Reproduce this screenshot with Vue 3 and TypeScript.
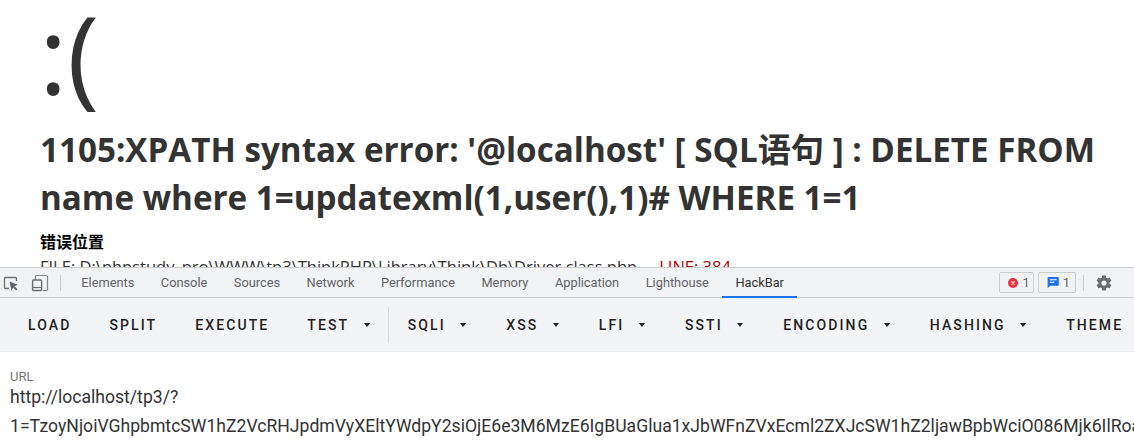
<script setup lang="ts">
const tabs = ['Elements', 'Console', 'Sources', 'Network', 'Performance', 'Memory', 'Application', 'Lighthouse', 'HackBar']
const leftButtons = [
  { label: 'LOAD', menu: false },
  { label: 'SPLIT', menu: false },
  { label: 'EXECUTE', menu: false },
  { label: 'TEST', menu: true },
]
const rightButtons = [
  { label: 'SQLI', menu: true },
  { label: 'XSS', menu: true },
  { label: 'LFI', menu: true },
  { label: 'SSTI', menu: true },
  { label: 'ENCODING', menu: true },
  { label: 'HASHING', menu: true },
  { label: 'THEME', menu: false },
]
</script>

<template>
  <div class="root">
    <main class="page">
      <div class="face">:(</div>
      <h1 class="title">1105:XPATH syntax error: '@localhost' [ SQL语句 ] : DELETE FROM name where 1=updatexml(1,user(),1)# WHERE 1=1</h1>
      <h2 class="loc">错误位置</h2>
      <p class="file">FILE: D:\phpstudy_pro\WWW\tp3\ThinkPHP\Library\Think\Db\Driver.class.php<span class="sep"></span><span class="line">LINE: 384</span></p>
    </main>
    <section class="devtools">
      <header class="tabbar">
        <svg class="ico" width="20" height="20" viewBox="0 0 20 20">
          <path d="M8 15.500H4.500a1 1 0 0 1-1-1V5.500a1 1 0 0 1 1-1h10a1 1 0 0 1 1 1V8" fill="none" stroke="#6e6e6e" stroke-width="1.300"/>
          <path d="M8.500 8.500l8.300 3.200-3.400 1.500 3 3-1.300 1.300-3-3-1.500 3.400z" fill="#5f6368"/>
        </svg>
        <svg class="ico ico2" width="20" height="20" viewBox="0 0 20 20">
          <path d="M5.500 7V3.500a1 1 0 0 1 1-1h10a1 1 0 0 1 1 1v13a1 1 0 0 1-1 1h-4" fill="none" stroke="#80868b" stroke-width="1.200"/>
          <rect x="2.600" y="7" width="9" height="10.500" rx="1" fill="none" stroke="#6e6e6e" stroke-width="1.400"/>
          <path d="M3 14.500h8" stroke="#6e6e6e" stroke-width="1.200"/>
        </svg>
        <span class="vdiv first"></span>
        <nav class="tabs">
          <span v-for="t in tabs" :key="t" class="tab" :class="{ active: t === 'HackBar' }">{{ t }}</span>
        </nav>
        <div class="status">
          <span class="pill pill-err">
            <svg width="10" height="10" viewBox="0 0 12 12"><circle cx="6" cy="6" r="6" fill="#e8303f"/><path d="M4.200 4.200l3.600 3.600M7.800 4.200l-3.600 3.600" stroke="#fff" stroke-width="1.400"/></svg>
            1
          </span>
          <span class="pill pill-msg">
            <svg width="12" height="13" viewBox="0 0 13 14"><path d="M1.500 1h10.500a.8.8 0 0 1 .8.800v8a.8.800 0 0 1-.8.800H3.500L.7 13.200V1.800a.8.8 0 0 1 .8-.8z" fill="#1a73e8"/><path d="M3 4h7.500M3 6.800h5" stroke="#fff" stroke-width="1.100"/></svg>
            1
          </span>
          <span class="vdiv"></span>
          <svg class="gear" width="18" height="18" viewBox="0 0 24 24"><path fill="#6a6d70" d="M19.430 12.980c.04-.32.070-.64.070-.98s-.03-.66-.07-.98l2.110-1.650c.19-.15.240-.42.120-.64l-2-3.460c-.12-.22-.39-.3-.61-.22l-2.490 1c-.52-.4-1.080-.73-1.690-.98l-.38-2.650A.49.490 0 0 0 14 2h-4c-.25 0-.46.180-.49.420l-.38 2.650c-.61.250-1.170.590-1.690.98l-2.490-1c-.23-.09-.49 0-.61.220l-2 3.460c-.13.220-.07.490.12.640l2.110 1.650c-.04.320-.07.650-.07.980s.03.660.07.980l-2.110 1.650c-.19.150-.24.420-.12.640l2 3.460c.12.220.39.300.61.220l2.490-1c.52.400 1.080.730 1.690.980l.38 2.650c.03.240.24.420.49.420h4c.25 0 .46-.18.490-.42l.38-2.650c.61-.25 1.170-.59 1.690-.98l2.490 1c.23.090.49 0 .61-.22l2-3.460c.12-.22.070-.49-.12-.64l-2.110-1.650zM12 15.500c-1.930 0-3.500-1.570-3.500-3.500s1.570-3.500 3.500-3.500 3.500 1.570 3.500 3.500-1.570 3.500-3.500 3.500z"/></svg>
        </div>
      </header>
      <div class="toolbar">
        <button v-for="b in leftButtons" :key="b.label" class="btn" :class="{ menu: b.menu }">{{ b.label }}<i v-if="b.menu" class="caret"></i></button>
        <span class="tdiv"></span>
        <button v-for="b in rightButtons" :key="b.label" class="btn" :class="{ menu: b.menu }">{{ b.label }}<i v-if="b.menu" class="caret"></i></button>
      </div>
      <div class="form">
        <label class="label">URL</label>
        <div class="value">http://localhost/tp3/?<br>1=TzoyNjoiVGhpbmtcSW1hZ2VcRHJpdmVyXEltYWdpY2siOjE6e3M6MzE6IgBUaGlua1xJbWFnZVxEcml2ZXJcSW1hZ2ljawBpbWciO086Mjk6IlRoaW5rXFNlc3Npb24</div>
      </div>
    </section>
  </div>
</template>

<style>
html, body { margin: 0; background: #fff; }
</style>

<style scoped>
.root {
  width: 1134px;
  height: 445px;
  display: flex;
  flex-direction: column;
  overflow: hidden;
  background: #fff;
}
.page {
  height: 267px;
  flex: none;
  overflow: hidden;
  padding: 0 30px 0 40px;
  box-sizing: border-box;
  color: #333;
  font-family: "Open Sans", "Noto Sans CJK SC", sans-serif;
}
.face {
  font-size: 108px;
  line-height: 100px;
  height: 100px;
  padding-top: 4px;
  margin-bottom: 22px;
  margin-left: -1px;
  font-weight: 400;
}
.title {
  margin: 0;
  font-size: 33.200px;
  line-height: 48px;
  font-weight: 700;
}
.loc {
  margin: 7px 0 0;
  font-size: 16px;
  line-height: 24px;
  font-weight: 700;
  color: #000;
  font-family: "Noto Sans CJK SC", sans-serif;
}
.file {
  margin: 3px 0 0;
  font-size: 16.500px;
  line-height: 22px;
  white-space: nowrap;
  font-family: "Open Sans", sans-serif;
}
.sep { display: inline-block; width: 22px; }
.line { color: #a00; }
.devtools {
  flex: 1;
  display: flex;
  flex-direction: column;
  min-height: 0;
  border-top: 1px solid #cbcdd1;
}
.tabbar {
  height: 29px;
  flex: none;
  display: flex;
  align-items: center;
  background: #f1f3f4;
  border-bottom: 1px solid #cbcdd1;
  font-family: Roboto, sans-serif;
  font-size: 12.800px;
  color: #5f6368;
}
.ico { margin-left: 1px; flex: none; }
.ico2 { margin-left: 9px; }
.vdiv { width: 1px; height: 16px; background: #ccc; flex: none; }
.first { margin-left: 10px; }
.tabs { display: flex; height: 100%; margin-left: 7px; }
.tab {
  display: flex;
  align-items: center;
  padding: 0 13.250px;
  height: 100%;
  box-sizing: border-box;
}
.tab.active {
  color: #333;
  border-bottom: 2px solid #1a73e8;
  margin-bottom: -1px;
  height: calc(100% + 1px);
  padding-top: 1px;
}
.status {
  margin-left: auto;
  display: flex;
  align-items: center;
  gap: 4px;
  padding-right: 21px;
}
.pill {
  display: flex;
  align-items: center;
  height: 21px;
  border: 1px solid #cbcdd1;
  border-radius: 2px;
  box-sizing: border-box;
}
.pill-err { gap: 5px; padding: 0 3px 0 8px; }
.pill-msg { gap: 4px; padding: 0 5px 0 8px; }
.status .vdiv { margin: 0 7px 0 3px; }
.toolbar {
  height: 53px;
  flex: none;
  display: flex;
  align-items: center;
  background: #f3f4f6;
  padding-left: 9px;
  box-sizing: border-box;
  white-space: nowrap;
  overflow: hidden;
}
.btn {
  all: unset;
  flex: none;
  display: flex;
  align-items: center;
  padding: 0 19px;
  height: 36px;
  font-family: Roboto, sans-serif;
  font-size: 14px;
  font-weight: 500;
  letter-spacing: 2.100px;
  color: #1f1f1f;
}
.caret {
  display: block;
  margin-left: 14.500px;
  margin-right: 2px;
  width: 0;
  height: 0;
  border-left: 3.500px solid transparent;
  border-right: 3.500px solid transparent;
  border-top: 4px solid #222;
}
.tdiv { width: 1px; height: 36px; background: #d8d9db; flex: none; margin: 0 0 0 -3px; }
.form {
  flex: 1;
  padding: 18px 10px 0;
  font-family: Roboto, sans-serif;
  overflow: hidden;
  border-top: 1px solid #eee;
}
.label { display: block; font-size: 13px; line-height: 14px; color: #757575; }
.value {
  margin-top: -1px;
  font-size: 17.600px;
  line-height: 29px;
  white-space: nowrap;
  color: #333;
}
</style>
